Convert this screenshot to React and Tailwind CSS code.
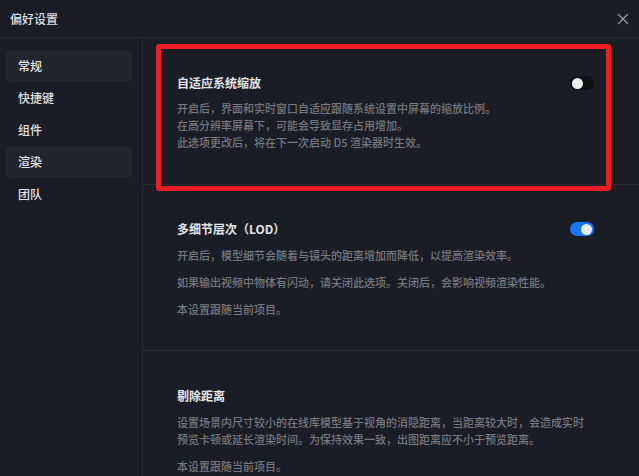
import React from "react";

const font = { fontFamily: '"Noto Sans CJK SC", "Noto Sans", sans-serif' };

function Toggle({ on }) {
  return (
    <div
      className={`relative h-[14px] w-[24px] shrink-0 rounded-full ${on ? "bg-[#1677ff]" : "bg-[#0f1014]"}`}
    >
      <div
        className={`absolute top-[1.5px] h-[11px] w-[11px] rounded-full ${on ? "right-[2px] bg-[#e8eefc]" : "left-[2px] bg-[#ececec]"}`}
      />
    </div>
  );
}

function Section({ title, on, children, border = true }) {
  return (
    <div className={`pl-[34px] pr-[45px] pt-[34px] ${border ? "border-b border-[#2a2c33]" : ""}`}>
      <div className="flex h-[20px] items-center justify-between">
        <div className="text-[12px] font-semibold text-[#e4e5e7]">{title}</div>
        {on !== undefined && <Toggle on={on} />}
      </div>
      <div className="mt-[8px] flex flex-col gap-[10px] text-[11px] font-medium leading-[17px] text-[#76787d]">
        {children}
      </div>
    </div>
  );
}

export default function App() {
  const items = ["常规", "快捷键", "组件", "渲染", "团队"];
  return (
    <div style={font} className="h-[476px] w-[639px] overflow-hidden bg-[#1b1d24]">
      <div className="flex h-[38px] items-center justify-between border-b border-[#2a2c33] pl-[10px] pr-[8px]">
        <div className="text-[12px] font-medium text-[#dcdde0]">偏好设置</div>
        <svg width="14" height="14" viewBox="0 0 14 14" className="mr-[1px]">
          <path d="M2 2 L12 12 M12 2 L2 12" stroke="#9a9ca2" strokeWidth="1.2" />
        </svg>
      </div>
      <div className="flex h-[438px]">
        <div className="w-[143px] shrink-0 border-r border-[#2a2c33] pl-[6px] pr-[10px] pt-[12px]">
          {items.map((it, i) => (
            <div
              key={it}
              className={`flex h-[32px] items-center rounded-[4px] pl-[12px] text-[12px] font-medium text-[#e2e3e5] ${i === 0 || i === 3 ? "bg-[#23252c]" : ""}`}
            >
              {it}
            </div>
          ))}
        </div>
        <div className="relative flex-1">
          <div className="h-[147px] pl-[34px] pr-[45px] pt-[35px] border-b border-[#2a2c33]">
            <div className="flex h-[20px] items-center justify-between">
              <div className="text-[12px] font-semibold text-[#e4e5e7]">自适应系统缩放</div>
              <Toggle on={false} />
            </div>
            <div className="mt-[7px] text-[11px] font-medium leading-[17px] text-[#76787d]">
              <div>开启后，界面和实时窗口自适应跟随系统设置中屏幕的缩放比例。</div>
              <div>在高分辨率屏幕下，可能会导致显存占用增加。</div>
              <div>此选项更改后，将在下一次启动 D5 渲染器时生效。</div>
            </div>
          </div>
          <div className="h-[167px]">
            <Section title="多细节层次（LOD）" on={true}>
              <div>开启后，模型细节会随着与镜头的距离增加而降低，以提高渲染效率。</div>
              <div>如果输出视频中物体有闪动，请关闭此选项。关闭后，会影响视频渲染性能。</div>
              <div className="pb-[32px]">本设置跟随当前项目。</div>
            </Section>
          </div>
          <Section title="剔除距离" border={false}>
            <div className="whitespace-nowrap">
              设置场景内尺寸较小的在线库模型基于视角的消隐距离，当距离较大时，会造成实时
              <br />
              预览卡顿或延长渲染时间。为保持效果一致，出图距离应不小于预览距离。
            </div>
            <div>本设置跟随当前项目。</div>
          </Section>
          <div className="pointer-events-none absolute left-[13px] top-[6px] h-[147px] w-[455px] rounded-[3px] border-[5px] border-[#ee1c25]" />
        </div>
      </div>
    </div>
  );
}
